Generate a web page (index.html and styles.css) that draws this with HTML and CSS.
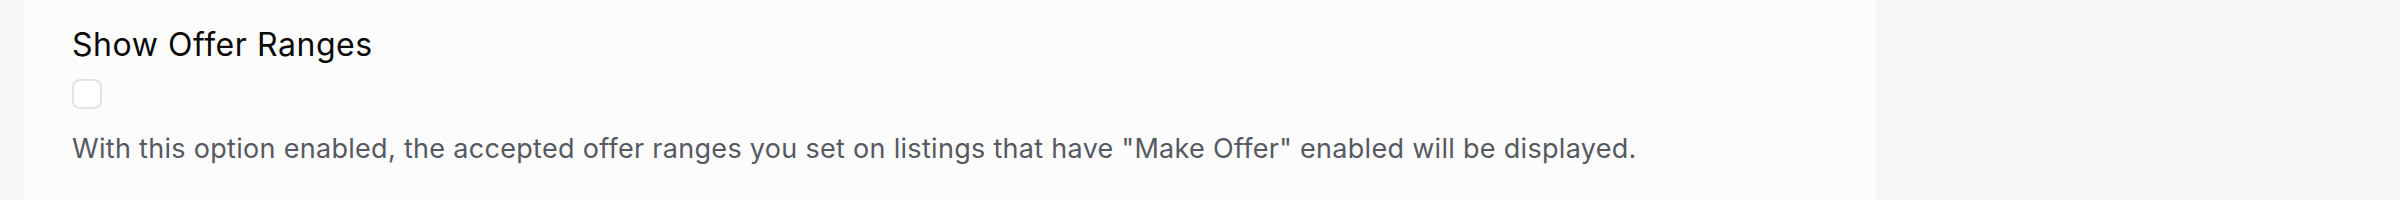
FILE: index.html
```html
<!DOCTYPE html>
<html lang="en">
<head>
<meta charset="utf-8">
<title>Show Offer Ranges</title>
<link rel="stylesheet" href="styles.css">
</head>
<body>
<div class="page">
  <section class="panel">
    <h2 class="title">Show Offer Ranges</h2>
    <label class="check"><input type="checkbox" class="check-input"><span class="check-box"></span></label>
    <p class="desc">With this option enabled, the accepted offer ranges you set on listings that have "Make Offer" enabled will be displayed.</p>
  </section>
</div>
</body>
</html>
```
FILE: styles.css
```css
html, body {
  margin: 0;
  padding: 0;
  background: #f7f6f4;
  font-family: Inter, "Noto Sans", sans-serif;
}
.page {
  display: flex;
  padding-left: 24px;
  height: 200px;
}
.panel {
  width: 1852px;
  box-sizing: border-box;
  background: #fcfcfc;
  padding: 25px 48px 0;
  display: flex;
  flex-direction: column;
  align-items: flex-start;
}
.title {
  margin: 0;
  font-size: 32px;
  line-height: 40px;
  font-weight: 400;
  letter-spacing: 0.55px;
  color: #0a0a0a;
}
.check {
  display: block;
  margin-top: 14px;
  width: 30px;
  height: 30px;
}
.check-input {
  display: none;
}
.check-box {
  display: block;
  width: 30px;
  height: 30px;
  box-sizing: border-box;
  border: 2px solid #e1e4e9;
  border-radius: 8px;
  background: #ffffff;
}
.desc {
  margin: 20px 0 0;
  font-size: 27px;
  line-height: 39px;
  letter-spacing: 0.3px;
  color: #565961;
}
```
